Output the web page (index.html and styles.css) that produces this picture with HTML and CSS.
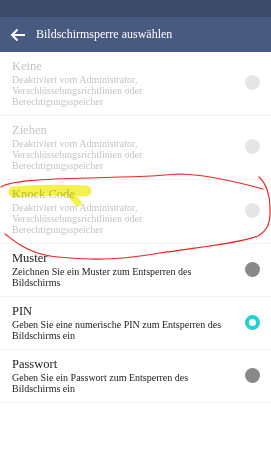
FILE: index.html
```html
<!DOCTYPE html>
<html lang="de">
<head>
<meta charset="utf-8">
<link rel="stylesheet" href="styles.css">
</head>
<body>
<div class="screen">
  <div class="statusbar"></div>
  <header class="toolbar">
    <svg class="back" width="16" height="14" viewBox="0 0 16 14"><path d="M15 7H2M7.5 1.5L2 7l5.5 5.5" fill="none" stroke="#fff" stroke-width="2"/></svg>
    <span class="title">Bildschirmsperre auswählen</span>
  </header>
  <ul class="list">
    <li class="item disabled">
      <div class="text"><div class="name">Keine</div><div class="desc">Deaktiviert vom Administrator,<br>Verschlüsselungsrichtlinien oder<br>Berechtigungsspeicher</div></div>
      <span class="radio"></span>
    </li>
    <li class="item disabled">
      <div class="text"><div class="name">Ziehen</div><div class="desc">Deaktiviert vom Administrator,<br>Verschlüsselungsrichtlinien oder<br>Berechtigungsspeicher</div></div>
      <span class="radio"></span>
    </li>
    <li class="item disabled">
      <div class="text"><div class="name">Knock Code</div><div class="desc">Deaktiviert vom Administrator,<br>Verschlüsselungsrichtlinien oder<br>Berechtigungsspeicher</div></div>
      <span class="radio"></span>
    </li>
    <li class="item">
      <div class="text"><div class="name">Muster</div><div class="desc">Zeichnen Sie ein Muster zum Entsperren des<br>Bildschirms</div></div>
      <span class="radio"></span>
    </li>
    <li class="item">
      <div class="text"><div class="name">PIN</div><div class="desc">Geben Sie eine numerische PIN zum Entsperren des<br>Bildschirms ein</div></div>
      <span class="radio checked"></span>
    </li>
    <li class="item">
      <div class="text"><div class="name">Passwort</div><div class="desc">Geben Sie ein Passwort zum Entsperren des<br>Bildschirms ein</div></div>
      <span class="radio"></span>
    </li>
  </ul>
  <svg class="annotation" width="271" height="450" viewBox="0 0 271 450">
    <g class="marker">
      <path d="M14 192 C35 190 60 190 86 191" stroke="#f3ef2a" stroke-width="11" stroke-linecap="round" fill="none"/>
      <path d="M70 194 L78 203" stroke="#f3ef2a" stroke-width="7" stroke-linecap="round" fill="none"/>
    </g>
    <g fill="none" stroke="#f32020" stroke-width="1.2" stroke-linecap="round">
      <path d="M1 187 C10 181 40 179 90 178 C130 177 160 176 178 174 C200 174 230 180 263 189"/>
      <path d="M259 177 C266 183 270 195 270 208 C271 222 268 230 258 236 C240 243 200 247 160 253 C130 258 110 260 90 259 C60 258 40 257 22 246 C12 240 8 236 5 234"/>
    </g>
  </svg>
</div>
</body>
</html>
```
FILE: styles.css
```css
* { box-sizing: border-box; margin: 0; padding: 0; }
html, body { width: 271px; height: 450px; background: #fff; overflow: hidden; }
body { font-family: "Liberation Serif", "Times New Roman", serif; }
.screen { position: relative; width: 271px; height: 450px; background: #fff; }
.statusbar { height: 17px; background: #3d4969; }
.toolbar { height: 35px; background: #485a80; display: flex; align-items: center; padding-left: 10px; gap: 10px; }
.back { flex: none; }
.title { color: #fff; font-size: 12px; }
.list { list-style: none; }
.item { display: flex; align-items: center; padding: 6px 11px 8px 12px; border-bottom: 1px solid #f1f1f1; }
.text { flex: 1; }
.name { font-size: 12.5px; line-height: 16px; color: #222; }
.desc { font-size: 10px; line-height: 11px; color: #222; }
.disabled .name, .disabled .desc { color: #c4c4c4; }
.radio { flex: none; width: 15px; height: 15px; border-radius: 50%; background: #888; }
.disabled .radio { background: #e6e6e6; }
.radio.checked { background: #fff; border: 4.5px solid #1fd2d4; }
.annotation { position: absolute; left: 0; top: 0; pointer-events: none; }
.marker { mix-blend-mode: multiply; opacity: 0.85; }
```
